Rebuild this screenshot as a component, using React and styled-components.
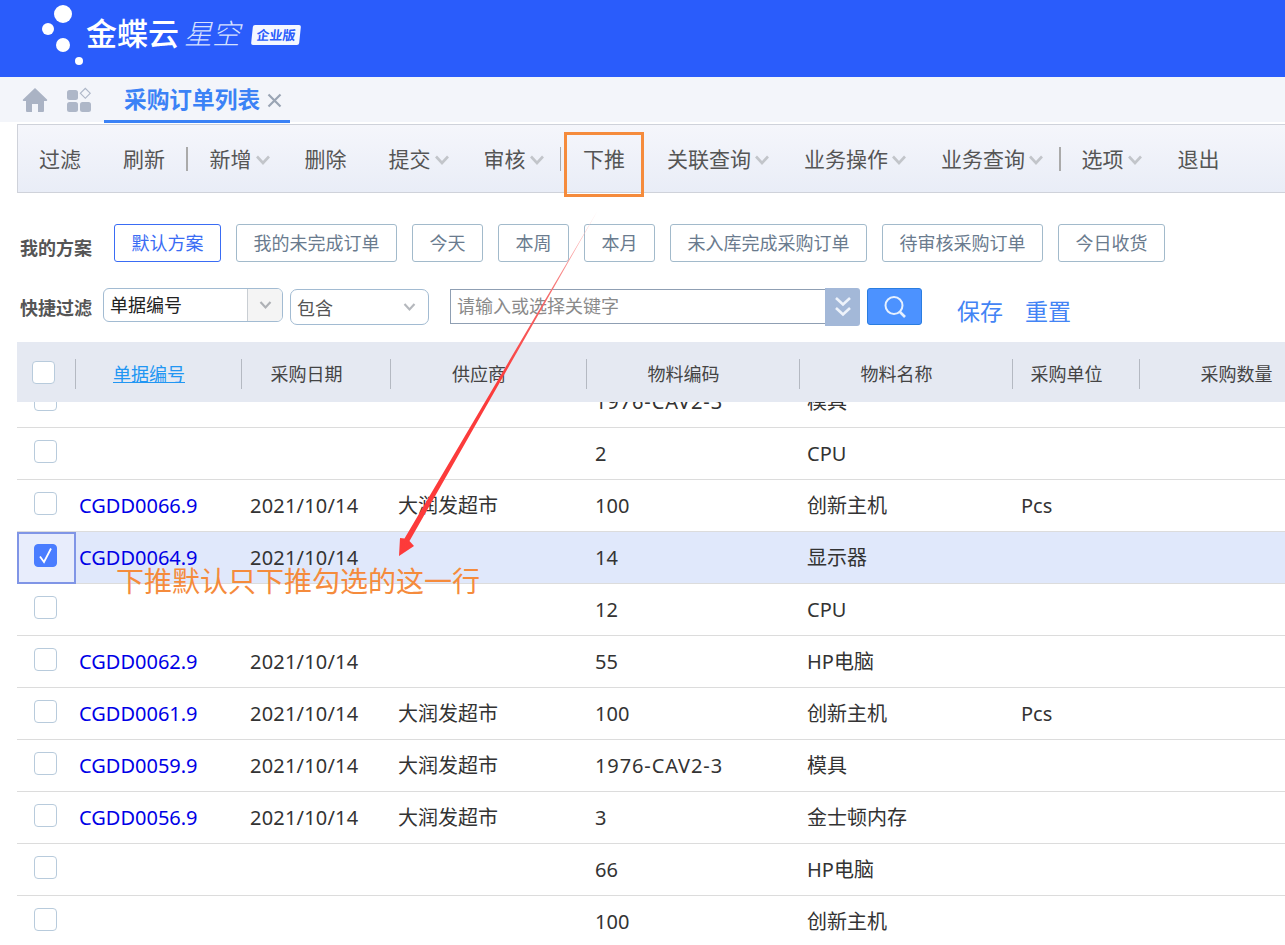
import React from 'react';
import styled, { createGlobalStyle } from 'styled-components';

const Global = createGlobalStyle`
  html, body { margin: 0; padding: 0; background: #fff; overflow: hidden; }
  * { box-sizing: border-box; }
  body { font-family: "Noto Sans", "Noto Sans CJK SC", sans-serif; color: #333; }
`;

const Page = styled.div`
  position: relative;
  width: 1285px;
  height: 945px;
  overflow: hidden;
  background: #fff;
`;

/* ---------- header ---------- */
const Header = styled.header`
  height: 77px;
  background: #2a5cfb;
  display: flex;
  align-items: flex-start;
  padding-left: 40px;
`;
const LogoDots = styled.svg`
  width: 46px;
  height: 70px;
  flex: none;
`;
const BrandMain = styled.span`
  margin: 11px 0 0 0;
  font-size: 31px;
  line-height: 44px;
  font-weight: 500;
  color: #fff;
  white-space: nowrap;
`;
const BrandSub = styled.span`
  margin: 11px 0 0 5px;
  font-size: 28px;
  line-height: 44px;
  font-weight: 300;
  font-style: italic;
  color: #d5e0ff;
  white-space: nowrap;
`;
const Edition = styled.span`
  margin: 25px 0 0 12px;
  width: 48px;
  height: 20px;
  background: #f4f7ff;
  border-radius: 2px;
  transform: skewX(-6deg);
  color: #2a5cfb;
  font-size: 13px;
  line-height: 20px;
  font-weight: 700;
  text-align: center;
  white-space: nowrap;
`;

/* ---------- tab bar ---------- */
const TabBar = styled.nav`
  height: 45px;
  background: #f3f5fa;
  display: flex;
  align-items: flex-start;
  padding-left: 22px;
`;
const HomeIcon = styled.svg`
  width: 26px;
  height: 26px;
  margin-top: 10px;
  flex: none;
`;
const AppsIcon = styled.svg`
  width: 26px;
  height: 26px;
  margin: 10px 0 0 18px;
  flex: none;
`;
const Tab = styled.div`
  margin-left: 12px;
  width: 186px;
  height: 46px;
  border-bottom: 3px solid #3b82f6;
  padding-left: 20px;
  display: flex;
  align-items: center;
  gap: 7px;
`;
const TabLabel = styled.span`
  font-size: 22.7px;
  font-weight: 700;
  color: #3b82f6;
  white-space: nowrap;
`;
const TabClose = styled.svg`
  width: 15px;
  height: 15px;
  margin-top: 3px;
  flex: none;
`;

/* ---------- toolbar ---------- */
const Toolbar = styled.div`
  margin: 2px 0 0 17px;
  height: 69px;
  border: 1px solid #cfd2da;
  border-right: none;
  background: linear-gradient(#f5f6fb, #e9edf7);
  display: flex;
  align-items: center;
  color: #555;
  font-size: 21px;
`;
const ToolItem = styled.div`
  display: flex;
  align-items: center;
  padding: 0 ${p => p.$pr}px 0 21px;
  white-space: nowrap;
  line-height: 30px;
`;
const ToolCaret = styled.svg`
  width: 18px;
  height: 12px;
  margin: 3px -2px 0 2px;
  flex: none;
`;
const ToolSep = styled.i`
  width: 1.5px;
  height: 24px;
  margin: 0 ${p => p.$mr}px 0 ${p => p.$ml}px;
  background: #aaa;
  flex: none;
`;

/* ---------- filters ---------- */
const PlanRow = styled.div`
  margin-top: 31px;
  padding-left: 20px;
  height: 38px;
  display: flex;
  align-items: center;
`;
const RowLabel = styled.span`
  width: ${p => p.$w}px;
  flex: none;
  font-size: 18px;
  font-weight: 700;
  color: #555;
  white-space: nowrap;
  position: relative;
  top: ${p => p.$top || 0}px;
`;
const Plans = styled.div`
  display: flex;
  gap: 15px;
`;
const PlanButton = styled.button`
  height: 38px;
  padding: 0 16.5px 2px;
  border: 1px solid ${p => (p.$active ? '#3a6cf4' : '#a2bacb')};
  border-radius: 3px;
  background: #fff;
  font: inherit;
  font-size: 18px;
  color: ${p => (p.$active ? '#3a6cf4' : '#6a7b8e')};
  white-space: nowrap;
`;
const QuickRow = styled.div`
  margin-top: 26px;
  padding-left: 20px;
  height: 38px;
  display: flex;
  align-items: flex-start;
`;
const FieldSelect = styled.div`
  width: 180px;
  height: 34px;
  border: 1px solid #a2bbd2;
  border-radius: 6px;
  background: #fff;
  display: flex;
  overflow: hidden;
  flex: none;
`;
const FieldValue = styled.span`
  flex: 1;
  padding-left: 6px;
  font-size: 18px;
  line-height: 32px;
  color: #222;
`;
const FieldCaret = styled.span`
  width: 35px;
  background: #f4f4f4;
  border-left: 1px solid #c9ced3;
  display: flex;
  align-items: center;
  justify-content: center;
`;
const OpSelect = styled.div`
  margin: 1px 0 0 7px;
  width: 139px;
  height: 36px;
  border: 1px solid #a2bbd2;
  border-radius: 7px;
  background: #fff;
  display: flex;
  align-items: center;
  justify-content: space-between;
  padding: 0 11px 0 6px;
  font-size: 18px;
  color: #555;
  flex: none;
`;
const CaretIcon = styled.svg`
  width: 15px;
  height: 10px;
  flex: none;
`;
const SearchField = styled.div`
  margin: 1px 0 0 21px;
  width: 376px;
  height: 35px;
  border: 1px solid #8f9fb3;
  border-right: none;
  padding-left: 6px;
  font-size: 18px;
  line-height: 33px;
  color: #8a8a8a;
  background: #fff;
  flex: none;
`;
const MoreButton = styled.div`
  width: 35px;
  height: 38px;
  margin-left: -1px;
  background: #a3b8d8;
  border-radius: 0 3px 3px 0;
  display: flex;
  align-items: center;
  justify-content: center;
  flex: none;
`;
const SearchButton = styled.div`
  margin-left: 7px;
  width: 55px;
  height: 37px;
  background: #4c92ff;
  border: 1px solid #2a7de0;
  border-radius: 3px;
  display: flex;
  align-items: center;
  justify-content: center;
  flex: none;
`;
const TextLink = styled.a`
  margin: 7px 0 0 ${p => p.$ml}px;
  font-size: 23px;
  line-height: 32px;
  color: #4384f5;
  white-space: nowrap;
`;

/* ---------- table ---------- */
const COLS = '58px 166px 149px 196px 213px 213px 127px 213px';
const Table = styled.div`
  margin: 16px 0 0 17px;
  overflow: hidden;
`;
const HeadRow = styled.div`
  display: grid;
  grid-template-columns: ${COLS};
  width: 1335px;
  height: 60px;
  background: #e5e9f2;
  align-items: center;
`;
const HeadCheck = styled.div`
  padding-left: 15px;
  display: flex;
`;
const HeadCell = styled.div`
  height: 30px;
  margin-top: 4px;
  border-left: 1px solid #b4b9c2;
  padding-right: 19px;
  text-align: center;
  font-size: 18px;
  line-height: 30px;
  color: #444;
  white-space: nowrap;
`;
const HeadLink = styled.a`
  color: #2196f3;
  text-decoration: underline;
`;
const Body = styled.div`
  height: 543px;
  overflow: hidden;
`;
const BodyInner = styled.div`
  margin-top: -26px;
`;
const Row = styled.div`
  display: grid;
  grid-template-columns: ${COLS};
  width: 1335px;
  height: 52px;
  border-bottom: 1px solid #dcdcdc;
  background: ${p => (p.$selected ? '#e0e8fb' : '#fff')};
  align-items: center;
`;
const CheckCell = styled.div`
  height: 52px;
  margin-right: -1px;
  padding: 12px 0 0 17px;
  box-shadow: ${p => (p.$selected ? 'inset 0 0 0 2px #8095e6' : 'none')};
  background: ${p => (p.$selected ? '#e8edfc' : 'transparent')};
`;
const Box = styled.span`
  display: flex;
  align-items: center;
  justify-content: center;
  width: 23px;
  height: 23px;
  border: 1px solid ${p => (p.$checked ? '#4a7dff' : '#b8cbdc')};
  border-radius: 4px;
  background: ${p => (p.$checked ? '#4a7dff' : '#fff')};
`;
const IdCell = styled.div`
  padding-left: 4px;
  font-size: 20px;
  line-height: 28px;
  color: #0000e6;
  white-space: nowrap;
`;
const Cell = styled.div`
  padding-left: ${p => p.$pl || 8}px;
  font-size: 20px;
  line-height: 28px;
  letter-spacing: ${p => p.$ls || 0}px;
  color: #333;
  white-space: nowrap;
`;

/* ---------- annotations ---------- */
const Callout = styled.div`
  position: absolute;
  left: 564px;
  top: 132px;
  width: 80px;
  height: 65px;
  border: 3px solid #f58b3c;
  pointer-events: none;
`;
const ArrowMark = styled.svg`
  position: absolute;
  left: 380px;
  top: 200px;
  width: 240px;
  height: 370px;
  pointer-events: none;
`;
const Note = styled.div`
  position: absolute;
  left: 116px;
  top: 561px;
  font-size: 28px;
  line-height: 40px;
  font-weight: 400;
  color: #f58b3c;
  white-space: nowrap;
`;

const Caret = ({ as: C = CaretIcon, color = '#b5b8bd' }) => (
  <C viewBox="0 0 18 12">
    <path d="M3 2.5 L9 9 L15 2.5" fill="none" stroke={color} strokeWidth="2.6" />
  </C>
);

const TOOLS = [
  { label: '过滤', pr: 21 },
  { label: '刷新', pr: 21 },
  { ml: 0, mr: 1 },
  { label: '新增', menu: true, pr: 14 },
  { label: '删除', pr: 21 },
  { label: '提交', menu: true, pr: 14 },
  { label: '审核', menu: true, pr: 14 },
  { ml: 2, mr: 1 },
  { label: '下推', pr: 21 },
  { label: '关联查询', menu: true, pr: 14 },
  { label: '业务操作', menu: true, pr: 14 },
  { label: '业务查询', menu: true, pr: 14 },
  { ml: 2, mr: 0 },
  { label: '选项', menu: true, pr: 15 },
  { label: '退出', pr: 21 },
];
const PLANS = ['默认方案', '我的未完成订单', '今天', '本周', '本月', '未入库完成采购订单', '待审核采购订单', '今日收货'];
const D = '2021/10/14';
const S = '大润发超市';
const ROWS = [
  ['', '', '', '1976-CAV2-3', '模具', ''],
  ['', '', '', '2', 'CPU', ''],
  ['CGDD0066.9', D, S, '100', '创新主机', 'Pcs'],
  ['CGDD0064.9', D, '', '14', '显示器', '', true],
  ['', '', '', '12', 'CPU', ''],
  ['CGDD0062.9', D, '', '55', 'HP电脑', ''],
  ['CGDD0061.9', D, S, '100', '创新主机', 'Pcs'],
  ['CGDD0059.9', D, S, '1976-CAV2-3', '模具', ''],
  ['CGDD0056.9', D, S, '3', '金士顿内存', ''],
  ['', '', '', '66', 'HP电脑', ''],
  ['', '', '', '100', '创新主机', ''],
];
const HEADS = ['采购日期', '供应商', '物料编码', '物料名称', '采购单位', '采购数量'];

export default function App() {
  return (
    <Page>
      <Global />
      <Header>
        <LogoDots viewBox="0 0 46 70">
          <g fill="#fff">
            <circle cx="23" cy="14" r="9" />
            <circle cx="8" cy="29" r="6" />
            <circle cx="23" cy="45" r="7" />
            <circle cx="39" cy="61" r="4" />
          </g>
        </LogoDots>
        <BrandMain>金蝶云</BrandMain>
        <BrandSub>星空</BrandSub>
        <Edition>企业版</Edition>
      </Header>

      <TabBar>
        <HomeIcon viewBox="0 0 26 26">
          <path
            d="M13 1 L25 12.5 C25.6 13.4 25 14 24 14 L22 14 L22 23.5 C22 24.5 21.5 25 20.5 25 L16 25 L16 17 L10 17 L10 25 L5.5 25 C4.5 25 4 24.5 4 23.5 L4 14 L2 14 C1 14 0.4 13.4 1 12.5 Z"
            fill="#aab3c4"
          />
        </HomeIcon>
        <AppsIcon viewBox="0 0 26 26">
          <g fill="#aeb7c8">
            <rect x="1" y="3" width="11" height="10" rx="2.5" />
            <rect x="1" y="15" width="11" height="10" rx="2.5" />
            <rect x="14" y="15" width="11" height="10" rx="2.5" />
          </g>
          <rect x="15.8" y="2.8" width="7" height="7" transform="rotate(45 19.3 6.3)" fill="none" stroke="#aeb7c8" strokeWidth="1.1" />
        </AppsIcon>
        <Tab>
          <TabLabel>采购订单列表</TabLabel>
          <TabClose viewBox="0 0 15 15">
            <path d="M1.5 1.5 L13.5 13.5 M13.5 1.5 L1.5 13.5" stroke="#9aa5b4" strokeWidth="2.2" fill="none" />
          </TabClose>
        </Tab>
      </TabBar>

      <Toolbar>
        {TOOLS.map((t, i) =>
          t.label ? (
            <ToolItem key={i} $pr={t.pr}>
              {t.label}
              {t.menu && <Caret as={ToolCaret} color="#c2c5ca" />}
            </ToolItem>
          ) : (
            <ToolSep key={i} $ml={t.ml} $mr={t.mr} />
          )
        )}
      </Toolbar>

      <PlanRow>
        <RowLabel $w={94} $top={4}>我的方案</RowLabel>
        <Plans>
          {PLANS.map((p, i) => (
            <PlanButton key={p} $active={i === 0}>{p}</PlanButton>
          ))}
        </Plans>
      </PlanRow>

      <QuickRow>
        <RowLabel $w={83} $top={6}>快捷过滤</RowLabel>
        <FieldSelect>
          <FieldValue>单据编号</FieldValue>
          <FieldCaret><Caret color="#aeb1b5" /></FieldCaret>
        </FieldSelect>
        <OpSelect>
          包含
          <Caret color="#b5b8bd" />
        </OpSelect>
        <SearchField>请输入或选择关键字</SearchField>
        <MoreButton>
          <svg width="20" height="24" viewBox="0 0 20 24">
            <path d="M3 3 L10 9.5 L17 3 M3 13 L10 19.5 L17 13" fill="none" stroke="#eef3fb" strokeWidth="2.6" />
          </svg>
        </MoreButton>
        <SearchButton>
          <svg width="26" height="26" viewBox="0 0 26 26">
            <circle cx="12" cy="11.5" r="8.5" fill="none" stroke="#e6f0ff" strokeWidth="2" />
            <path d="M18 18 L23 23" stroke="#e6f0ff" strokeWidth="2.6" />
          </svg>
        </SearchButton>
        <TextLink $ml={35}>保存</TextLink>
        <TextLink $ml={22}>重置</TextLink>
      </QuickRow>

      <Table>
        <HeadRow>
          <HeadCheck><Box /></HeadCheck>
          <HeadCell><HeadLink>单据编号</HeadLink></HeadCell>
          {HEADS.map(h => <HeadCell key={h}>{h}</HeadCell>)}
        </HeadRow>
        <Body>
          <BodyInner>
            {ROWS.map((r, i) => (
              <Row key={i} $selected={r[6]}>
                <CheckCell $selected={r[6]}>
                  <Box $checked={r[6]}>
                    {r[6] && (
                      <svg width="15" height="17" viewBox="0 0 15 17">
                        <path d="M2 9.5 L6 15 L13 1.5" fill="none" stroke="#fff" strokeWidth="1.8" />
                      </svg>
                    )}
                  </Box>
                </CheckCell>
                <IdCell>{r[0]}</IdCell>
                <Cell $pl={9} $ls={0.2}>{r[1]}</Cell>
                <Cell>{r[2]}</Cell>
                <Cell $pl={9} $ls={r[3].length > 5 ? 0.9 : 0}>{r[3]}</Cell>
                <Cell>{r[4]}</Cell>
                <Cell $pl={9}>{r[5]}</Cell>
                <Cell />
              </Row>
            ))}
          </BodyInner>
        </Body>
      </Table>

      <Callout />
      <ArrowMark viewBox="380 200 240 370">
        <defs>
          <linearGradient id="arrowFade" gradientUnits="userSpaceOnUse" x1="598" y1="210" x2="399" y2="556">
            <stop offset="0" stopColor="#ffd5d5" />
            <stop offset="0.25" stopColor="#f56a6a" />
            <stop offset="0.5" stopColor="#fb3c3c" />
            <stop offset="1" stopColor="#fd3a3a" />
          </linearGradient>
        </defs>
        <polygon points="598,210 409.5,541 414,546 399,556 400,538 404.5,538.5" fill="url(#arrowFade)" />
      </ArrowMark>
      <Note>下推默认只下推勾选的这一行</Note>
    </Page>
  );
}
